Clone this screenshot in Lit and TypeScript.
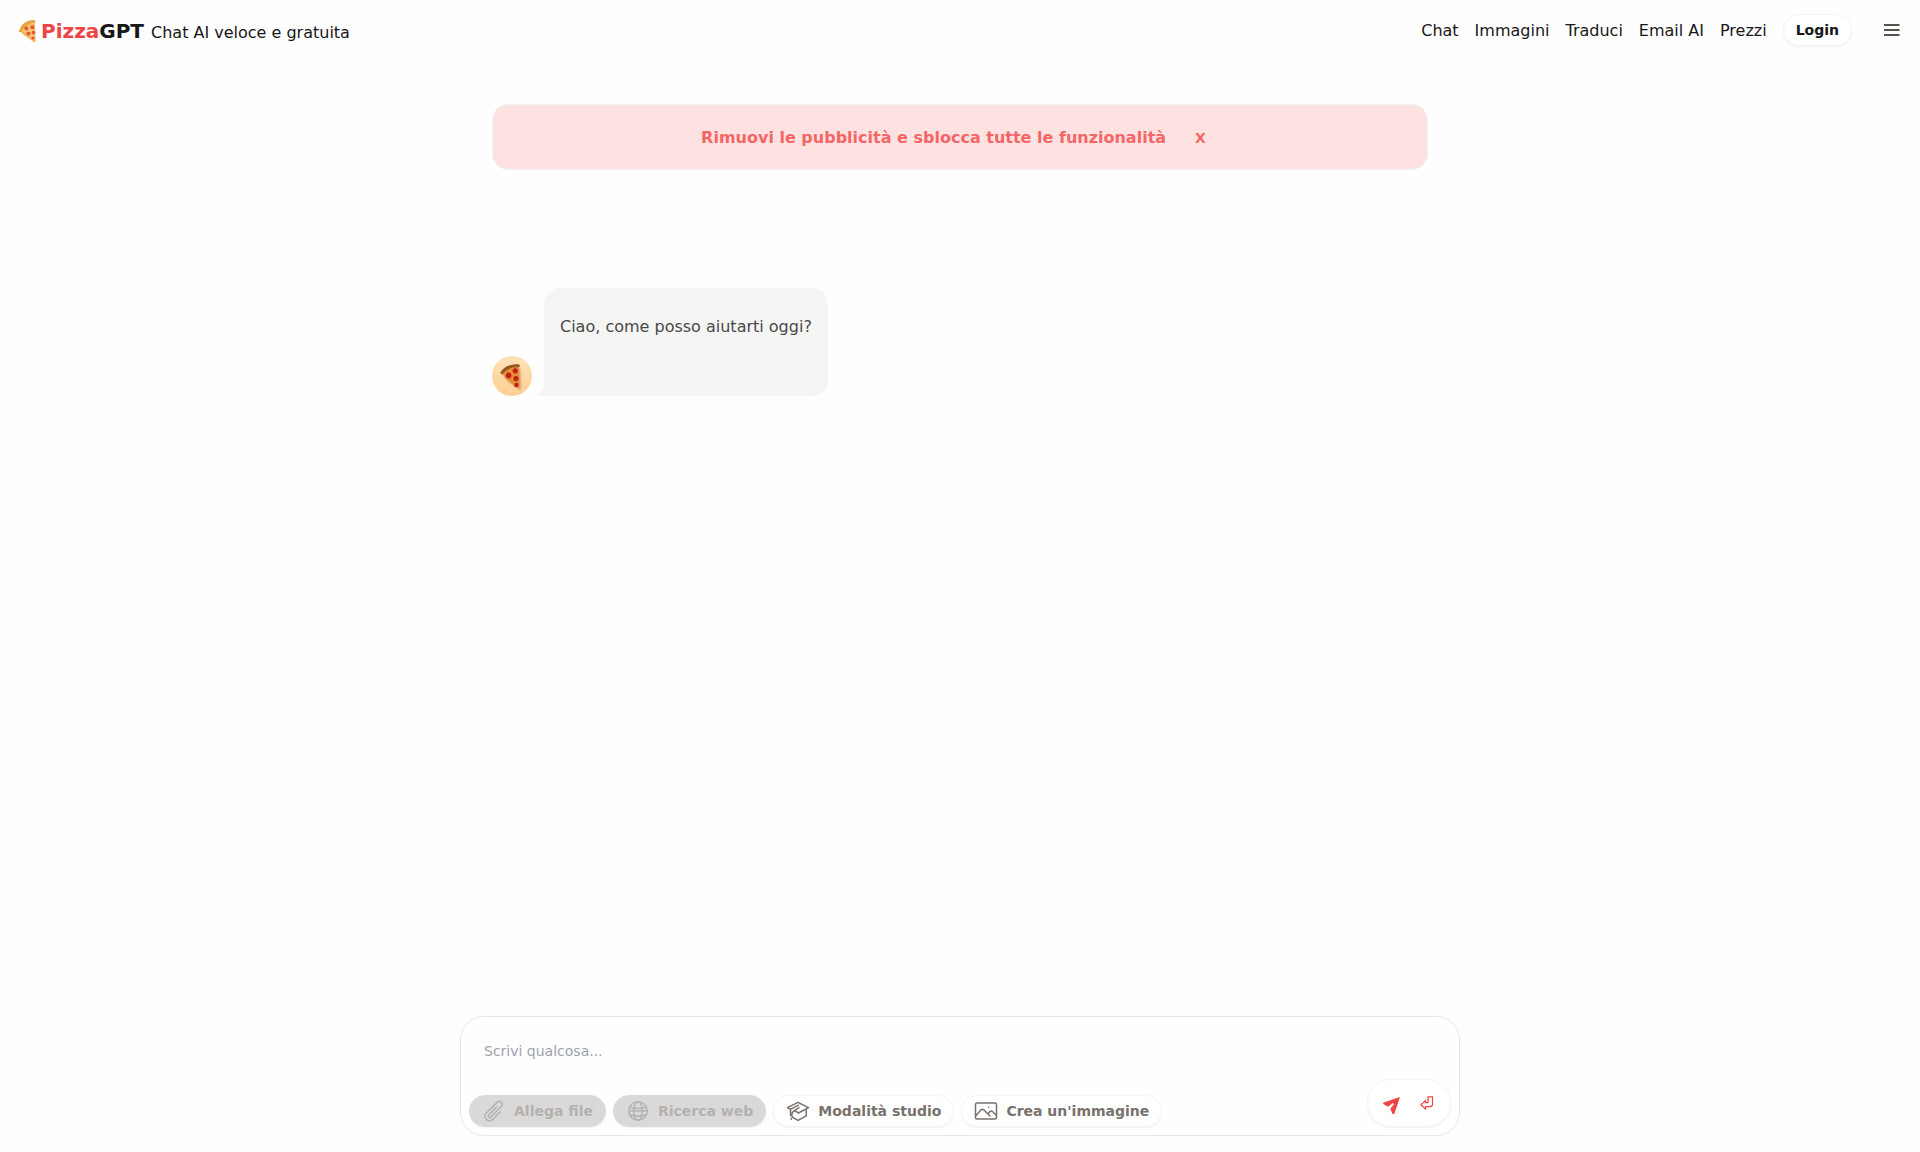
import { LitElement, html, css, svg } from "lit";
import { customElement, state } from "lit/decorators.js";

const logoSlice = html`<svg class="slice" viewBox="0 0 18 24" aria-hidden="true">
  <path d="M2.2 12.6 C5 7 10 4.4 17 4.2 L17.6 22 C17 23.6 15.6 23.4 14.6 22.2 C9.5 18.5 5 16 2.2 12.6Z" fill="#f9b75c"/>
  <path d="M5 11.6 C8 8 12 6 16.2 5.6 L16.8 20.5 C12 17.5 8 15 5 11.6Z" fill="#fcc876"/>
  <path d="M1 12.2 C3 5 8.6 1.2 15.6 1 C17.6 1 17.8 3.6 16 4 C10 4.6 6 7.4 3.4 12.2 C2.6 13.6 .7 13.4 1 12.2Z" fill="#e59a3c"/>
  <path d="M2 11.6 C4 6 9 2.4 15.6 2" fill="none" stroke="#f2ad4c" stroke-width="1"/>
  <g fill="#e2563b"><circle cx="8.4" cy="9.4" r="2"/><circle cx="14.4" cy="8.2" r="2"/><circle cx="10.4" cy="14.6" r="2"/><circle cx="15.4" cy="13.6" r="1.8"/><circle cx="15" cy="19" r="1.6"/></g>
</svg>`;

const avatarSlice = html`<svg class="avatar-slice" viewBox="0 0 40 40" aria-hidden="true">
  <defs><linearGradient id="crust" x1="0" y1="0" x2="1" y2="1"><stop offset="0" stop-color="#8a4f16"/><stop offset="1" stop-color="#a5672a"/></linearGradient>
  <filter id="soft" x="-20%" y="-20%" width="140%" height="140%"><feGaussianBlur stdDeviation="1"/></filter></defs>
  <path d="M12 20 L28 12 L28.500 34 C23 30 17 27 12 20Z" fill="#8a4a10" opacity=".5" filter="url(#soft)"/>
  <path d="M10 17.5 C14 13 20 11 26.8 11 L26.6 32 C20 28 14 24 10 17.5Z" fill="#e58f3c"/>
  <path d="M8.6 16 C12 10.4 19 8 27 8.4 C28.2 8.8 28 11 27 11.2 C20 11 14.4 13.4 10.6 18.2 C9.4 18.8 8.2 17.4 8.6 16Z" fill="url(#crust)"/>
  <g fill="#c5200b"><circle cx="16.6" cy="19.4" r="2.8"/><circle cx="23.2" cy="14.8" r="2.6"/><circle cx="24" cy="22.6" r="2.6"/><circle cx="24.4" cy="29" r="2.2"/></g>
</svg>`;

const paths = {
  clip: svg`<path d="m18.4 12.7-7.7 7.7a4.5 4.5 0 0 1-6.4-6.4L15.300 3.100A3 3 0 0 1 19.500 7.300L8.600 18.300a1.500 1.500 0 0 1-2.100-2.100l7.800-7.800"/>`,
  globe: svg`<circle cx="12" cy="12" r="9.2"/><ellipse cx="12" cy="12" rx="4.300" ry="9.200"/><path d="M3.800 8.200c5 1.700 11.400 1.700 16.400 0M3.800 15.800c5 1.700 11.400 1.700 16.400 0M2.800 12h18.400"/>`,
  study: svg`<path d="M1.500 8.700 12 3.300l10.500 5.400-2.300 1.200v7L12 21.400l-5.800-3.300M1.500 8.700l3 1.700 8-4.200M20.200 9.900 12.500 14l-4-2.300 4.500-3.200M4.500 10.400v6M5.200 19.500v.8M8.500 11.700c-2.600 1.200-2.900 3.200-2.500 5.600"/>`,
  image: svg`<rect x="1.500" y="4" width="21" height="16" rx="1.500"/><path d="M2 16.500l5.300-6h2.200l6.500 6.500M14 14.800l2.200-2.600h2l4 4M14.400 8.300h.2"/>`,
};

@customElement("app-root")
export class AppRoot extends LitElement {
  @state() private bannerOpen = true;

  static styles = css`
    :host { display: block; font: 16px/24px "DejaVu Sans", sans-serif; color: #171717; background: #fefefe; }
    * { box-sizing: border-box; }
    a { color: inherit; text-decoration: none; }
    button { font: inherit; color: inherit; background: none; border: 0; padding: 0; cursor: pointer; }
    .page { min-height: 100vh; display: flex; flex-direction: column; padding-bottom: 16px; }
    .header { display: flex; align-items: center; justify-content: space-between; height: 60px; padding: 0 12px 0 16px; }
    .brand { display: flex; align-items: baseline; gap: 7px; padding-top: 2px; }
    .name { font-weight: 700; font-size: 20px; line-height: 28px; white-space: nowrap; }
    .slice { width: 18px; height: 24px; margin: 0 5px 0 2px; vertical-align: -5px; }
    .pizza { color: #ef4444; }
    .nav { display: flex; align-items: center; gap: 16px; }
    .link { padding-top: 1px; }
    .pill { display: inline-flex; align-items: center; gap: 8px; height: 32px; padding: 0 12px; border: 1px solid #f5f5f4; border-radius: 16px; background: #fff; box-shadow: 0 1px 2px #0000000d; font-size: 14px; font-weight: 700; line-height: 14px; white-space: nowrap; }
    .menu { display: grid; place-items: center; width: 32px; height: 48px; margin-left: 8px; color: #57534e; }
    .menu svg { width: 20px; height: 20px; }
    .main { flex: 1; width: 100%; max-width: 1000px; margin: 0 auto; padding: 44px 32px 0; }
    .banner { display: flex; align-items: center; justify-content: center; gap: 16px; min-height: 66px; padding: 17px 16px 15px; border: 1px solid #f3f0f0; border-radius: 16px; background: #fee2e2; color: #f46666; font-weight: 700; }
    .close { padding: 0 13px; font-size: 14px; line-height: 24px; }
    .message { display: flex; align-items: flex-end; gap: 12px; padding-top: 118px; }
    .avatar { width: 40px; height: 40px; border-radius: 50%; background: linear-gradient(#ffe2b8, #ffcf94); overflow: hidden; }
    .avatar-slice { display: block; width: 40px; height: 40px; }
    .bubble { position: relative; margin: 0; padding: 25px 16px 55px; line-height: 28px; color: #484848; background: #f5f5f4; border-radius: 16px 16px 16px 0; }
    .tail { position: absolute; right: 100%; bottom: 0; width: 10px; height: 10px; fill: #f5f5f4; }
    .composer { display: flex; align-items: flex-end; width: calc(100% - 32px); max-width: 1000px; margin: 0 auto; padding: 8px; border: 1px solid #e5e7eb; border-radius: 24px; background: #fefefe; }
    .fields { flex: 1; display: flex; flex-direction: column; }
    .input { display: block; width: 100%; height: 70px; padding: 16px 15px; border: 0; outline: 0; resize: none; background: none; font: 14px/20px "DejaVu Sans", sans-serif; color: #171717; }
    .input::placeholder { color: #9ca3af; }
    .tools { display: flex; flex-wrap: wrap; gap: 7px; color: #78716c; }
    .pill:disabled { background: #dad9d8; border-color: #dad9d8; color: #b3b2b1; cursor: default; }
    .icon { width: 24px; height: 24px; fill: none; stroke: currentColor; stroke-width: 1.5; stroke-linecap: round; stroke-linejoin: round; }
    .send { display: flex; align-items: center; gap: 19px; width: 84px; height: 48px; padding-left: 13px; border: 1px solid #f5f5f4; border-radius: 24px; background: #fff; box-shadow: 0 1px 2px #0000000d; color: #ef4444; }
    .plane { width: 20px; height: 20px; margin-top: 4px; fill: currentColor; }
    .enter { width: 14px; height: 14px; fill: none; stroke: currentColor; stroke-width: 1.2; }
  `;

  private icon(name: keyof typeof paths) {
    return html`<svg class="icon" viewBox="0 0 24 24" aria-hidden="true">${paths[name]}</svg>`;
  }

  private tool(name: keyof typeof paths, label: string, disabled = false) {
    return html`<button class="pill" type="button" ?disabled=${disabled}>${this.icon(name)}<span>${label}</span></button>`;
  }

  render() {
    return html`<div class="page">
      <header class="header">
        <a class="brand" href="#"><span class="name">${logoSlice}<span class="pizza">Pizza</span><span>GPT</span></span><span>Chat AI veloce e gratuita</span></a>
        <nav class="nav">
          ${["Chat", "Immagini", "Traduci", "Email AI", "Prezzi"].map((item) => html`<a class="link" href="#">${item}</a>`)}
          <a class="pill" href="#">Login</a>
          <button class="menu" type="button" aria-label="Menu"><svg viewBox="0 0 20 20" fill="none" stroke="currentColor" stroke-width="2"><path d="M2 5h15.500M2 10h15.500M2 15h15.500"/></svg></button>
        </nav>
      </header>
      <main class="main">
        ${this.bannerOpen ? html`<div class="banner"><a href="#">Rimuovi le pubblicità e sblocca tutte le funzionalità</a><button class="close" type="button" @click=${() => (this.bannerOpen = false)}>X</button></div>` : ""}
        <div class="message">
          <div class="avatar">${avatarSlice}</div>
          <p class="bubble"><svg class="tail" viewBox="0 0 10 10" aria-hidden="true"><path d="M10 0V10H0C4 9.500 8 5 10 0Z"/></svg>Ciao, come posso aiutarti oggi?</p>
        </div>
      </main>
      <form class="composer" @submit=${(e: Event) => e.preventDefault()}>
        <div class="fields">
          <textarea class="input" aria-label="Messaggio" placeholder="Scrivi qualcosa..."></textarea>
          <div class="tools">
            ${this.tool("clip", "Allega file", true)}${this.tool("globe", "Ricerca web", true)}${this.tool("study", "Modalità studio")}${this.tool("image", "Crea un'immagine")}
          </div>
        </div>
        <button class="send" type="submit" aria-label="Invia">
          <svg class="plane" viewBox="0 0 20 20" aria-hidden="true"><path d="M19 2 2 7.700 2.300 9 7 11.800 11.800 8 13 9.200 9.300 13.800 11.500 19 13.300 19Z"/></svg>
          <svg class="enter" viewBox="0 0 14 14" aria-hidden="true"><path d="M8 .8h4.500v7.400q0 2.400-2.400 2.400H5.500v2.500L.9 8.700l4.600-4.200v2.200H8Z"/></svg>
        </button>
      </form>
    </div>`;
  }
}
